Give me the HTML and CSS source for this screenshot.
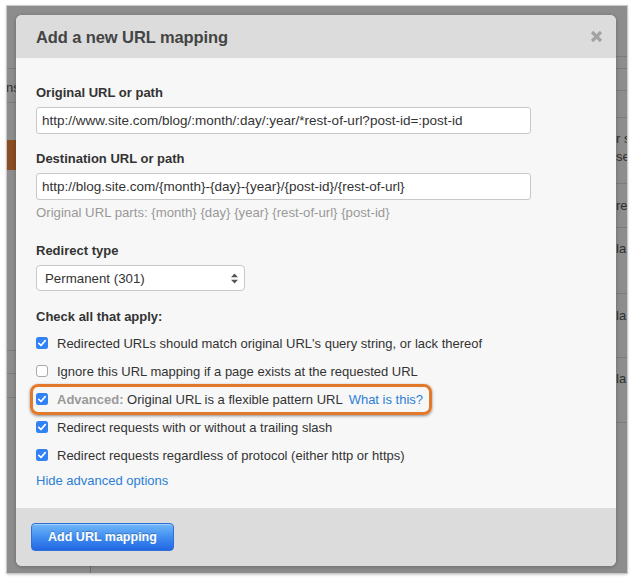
FILE: index.html
```html
<!DOCTYPE html>
<html>
<head>
<meta charset="utf-8">
<link rel="stylesheet" href="styles.css">
</head>
<body>
<div class="frame">
  <div class="backdrop">
    <div class="bg-line" style="top:62px;left:0;width:12px"></div>
    <div class="bg-line" style="top:96px;left:0;width:12px"></div>
    <div class="bg-text" style="top:74px;left:-1px">ns</div>
    <div class="bg-brown"></div>
    <div class="bg-line" style="top:344px;left:0;width:12px"></div>
    <div class="bg-line" style="top:367px;left:0;width:12px"></div>
    <div class="bg-line" style="top:391px;left:0;width:12px"></div>
    <div class="bg-line right" style="top:50px"></div>
    <div class="bg-line right" style="top:62px"></div>
    <div class="bg-line right" style="top:84px"></div>
    <div class="bg-line right" style="top:111px"></div>
    <div class="bg-line right" style="top:177px"></div>
    <div class="bg-line right" style="top:221px"></div>
    <div class="bg-line right" style="top:287px"></div>
    <div class="bg-line right" style="top:351px"></div>
    <div class="bg-line right" style="top:416px"></div>
    <div class="bg-text rt" style="top:125px">r s</div>
    <div class="bg-text rt" style="top:143px">se</div>
    <div class="bg-text rt" style="top:192px">re</div>
    <div class="bg-text rt" style="top:235px">la</div>
    <div class="bg-text rt" style="top:302px">la</div>
    <div class="bg-text rt" style="top:365px">la</div>
    <div class="bg-vline" style="left:83px"></div>
  </div>

  <div class="modal">
    <div class="modal-header">
      <h3 class="modal-title">Add a new URL mapping</h3>
      <svg class="close" width="13" height="13" viewBox="0 0 13 13"><path d="M2 2 L11 11 M11 2 L2 11" stroke="#a3a3a3" stroke-width="3.2" stroke-linecap="butt"/></svg>
    </div>
    <div class="modal-body">
      <label class="field-label">Original URL or path</label>
      <div class="input">http://www.site.com/blog/:month/:day/:year/*rest-of-url?post-id=:post-id</div>

      <label class="field-label spaced">Destination URL or path</label>
      <div class="input">http://blog.site.com/{month}-{day}-{year}/{post-id}/{rest-of-url}</div>
      <div class="help">Original URL parts: {month} {day} {year} {rest-of-url} {post-id}</div>

      <label class="field-label spaced2">Redirect type</label>
      <div class="select">
        <span>Permanent (301)</span>
        <svg width="7" height="11" viewBox="0 0 7 11"><polygon points="0,4.2 3.5,0.5 7,4.2" fill="#555"/><polygon points="0,6.8 3.5,10.5 7,6.8" fill="#555"/></svg>
      </div>

      <label class="field-label spaced3">Check all that apply:</label>
      <div class="checks">
        <div class="check-row">
          <svg class="cb" width="12" height="12" viewBox="0 0 12 12"><rect x="0" y="0" width="12" height="12" rx="2.5" fill="#3183f5"/><path d="M2.8 6.3 L5 8.5 L9.2 3.6" stroke="#fff" stroke-width="1.7" fill="none" stroke-linecap="round" stroke-linejoin="round"/></svg>
          <span>Redirected URLs should match original URL's query string, or lack thereof</span>
        </div>
        <div class="check-row">
          <svg class="cb" width="12" height="12" viewBox="0 0 12 12"><rect x="0.5" y="0.5" width="11" height="11" rx="2.5" fill="#fff" stroke="#a9a9a9"/></svg>
          <span>Ignore this URL mapping if a page exists at the requested URL</span>
        </div>
        <div class="check-row highlighted">
          <div class="highlight"></div>
          <svg class="cb" width="12" height="12" viewBox="0 0 12 12"><rect x="0" y="0" width="12" height="12" rx="2.5" fill="#3183f5"/><path d="M2.8 6.3 L5 8.5 L9.2 3.6" stroke="#fff" stroke-width="1.7" fill="none" stroke-linecap="round" stroke-linejoin="round"/></svg>
          <span><b class="adv">Advanced:</b> Original URL is a flexible pattern URL</span>
          <a class="link what">What is this?</a>
        </div>
        <div class="check-row">
          <svg class="cb" width="12" height="12" viewBox="0 0 12 12"><rect x="0" y="0" width="12" height="12" rx="2.5" fill="#3183f5"/><path d="M2.8 6.3 L5 8.5 L9.2 3.6" stroke="#fff" stroke-width="1.7" fill="none" stroke-linecap="round" stroke-linejoin="round"/></svg>
          <span>Redirect requests with or without a trailing slash</span>
        </div>
        <div class="check-row">
          <svg class="cb" width="12" height="12" viewBox="0 0 12 12"><rect x="0" y="0" width="12" height="12" rx="2.5" fill="#3183f5"/><path d="M2.8 6.3 L5 8.5 L9.2 3.6" stroke="#fff" stroke-width="1.7" fill="none" stroke-linecap="round" stroke-linejoin="round"/></svg>
          <span>Redirect requests regardless of protocol (either http or https)</span>
        </div>
      </div>
      <a class="link hide">Hide advanced options</a>
    </div>
    <div class="modal-footer">
      <button class="btn-primary">Add URL mapping</button>
    </div>
  </div>
</div>
</body>
</html>
```
FILE: styles.css
```css
html, body {
  margin: 0;
  padding: 0;
  background: #ffffff;
}
body {
  font-family: "Liberation Sans", Arial, Helvetica, sans-serif;
  font-size: 13px;
  color: #333;
  padding: 6px 0 0 7px;
  width: 634px;
  height: 581px;
  box-sizing: border-box;
}
.frame {
  position: relative;
  width: 620px;
  height: 567px;
  background: #8d8d8d;
  overflow: hidden;
  box-shadow: 0 0 0 1px #c9c9c9, 0 1px 3px rgba(0,0,0,0.35);
}
.backdrop {
  position: absolute;
  inset: 0;
}
.bg-line {
  position: absolute;
  height: 1px;
  background: #7b7b7b;
}
.bg-line.right {
  left: 600px;
  width: 20px;
}
.bg-text {
  position: absolute;
  font-size: 13px;
  line-height: 16px;
  color: #2f2f2f;
  white-space: nowrap;
}
.bg-text.rt {
  left: 609px;
}
.bg-brown {
  position: absolute;
  left: 0;
  top: 134px;
  width: 12px;
  height: 30px;
  background: #8a4d24;
}
.bg-vline {
  position: absolute;
  top: 555px;
  width: 1px;
  height: 12px;
  background: #6f6f6f;
}
.modal {
  position: absolute;
  left: 9px;
  top: 9px;
  width: 600px;
  height: 551px;
  background: #f7f7f7;
  border-radius: 6px;
  overflow: hidden;
  display: flex;
  flex-direction: column;
  box-shadow: 0 1px 4px rgba(0,0,0,0.25);
}
.modal-header {
  height: 43px;
  flex: none;
  background: #dcdcdc;
  display: flex;
  align-items: center;
  justify-content: space-between;
  padding: 0 13px 0 20px;
}
.modal-title {
  margin: 0;
  font-size: 16.5px;
  font-weight: bold;
  color: #444;
  line-height: 20px;
  letter-spacing: -0.1px;
}
.close {
  display: block;
  margin-top: -1px;
}
.modal-body {
  flex: 1;
  padding: 26px 20px 0 20px;
  display: flex;
  flex-direction: column;
  align-items: flex-start;
}
.field-label {
  display: block;
  font-weight: bold;
  font-size: 13px;
  line-height: 18px;
  color: #333;
}
.field-label.spaced { margin-top: 16px; }
.field-label.spaced2 { margin-top: 20px; }
.field-label.spaced3 { margin-top: 17px; }
.input {
  margin-top: 5px;
  width: 495px;
  height: 27px;
  box-sizing: border-box;
  background: #fff;
  border: 1px solid #c8c8c8;
  border-radius: 3px;
  padding: 0 5px;
  line-height: 25px;
  font-size: 13.5px;
  color: #333;
  white-space: nowrap;
  overflow: hidden;
}
.help {
  margin-top: 4px;
  line-height: 18px;
  color: #999;
  font-size: 13.2px;
}
.select {
  margin-top: 5px;
  width: 209px;
  height: 26px;
  box-sizing: border-box;
  background: #fff;
  border: 1px solid #c8c8c8;
  border-radius: 4px;
  padding: 0 6px 0 8px;
  display: flex;
  align-items: center;
  justify-content: space-between;
  color: #333;
  font-size: 13.3px;
}
.checks {
  margin-top: 3px;
  display: flex;
  flex-direction: column;
}
.check-row {
  position: relative;
  height: 28px;
  display: flex;
  align-items: center;
  white-space: nowrap;
}
.cb {
  display: block;
  flex: none;
  margin-right: 9px;
}
.adv {
  color: #9a9a9a;
  font-weight: bold;
}
.link {
  color: #2c7fd6;
  text-decoration: none;
}
.what {
  margin-left: 6px;
}
.highlight {
  position: absolute;
  left: -6px;
  top: -1px;
  width: 402px;
  height: 31px;
  box-sizing: border-box;
  border: 3px solid #e37a2b;
  border-radius: 8px;
  box-shadow: 0 1px 3px rgba(0,0,0,0.45);
}
.hide {
  margin-top: 3px;
  line-height: 18px;
}
.modal-footer {
  height: 58px;
  flex: none;
  background: #dcdcdc;
  padding: 15px 15px 0 15px;
  box-sizing: border-box;
}
.btn-primary {
  display: block;
  width: 143px;
  height: 28px;
  border: 1px solid #2f6fd8;
  border-radius: 4px;
  background: linear-gradient(#70b8f8, #3d8af0 55%, #2366e2);
  color: #fff;
  font-family: "Liberation Sans", Arial, Helvetica, sans-serif;
  font-weight: bold;
  font-size: 12.5px;
  text-shadow: 0 -1px 0 rgba(0,0,0,0.25);
  padding: 0;
  box-shadow: inset 0 1px 0 rgba(255,255,255,0.35);
}
```
